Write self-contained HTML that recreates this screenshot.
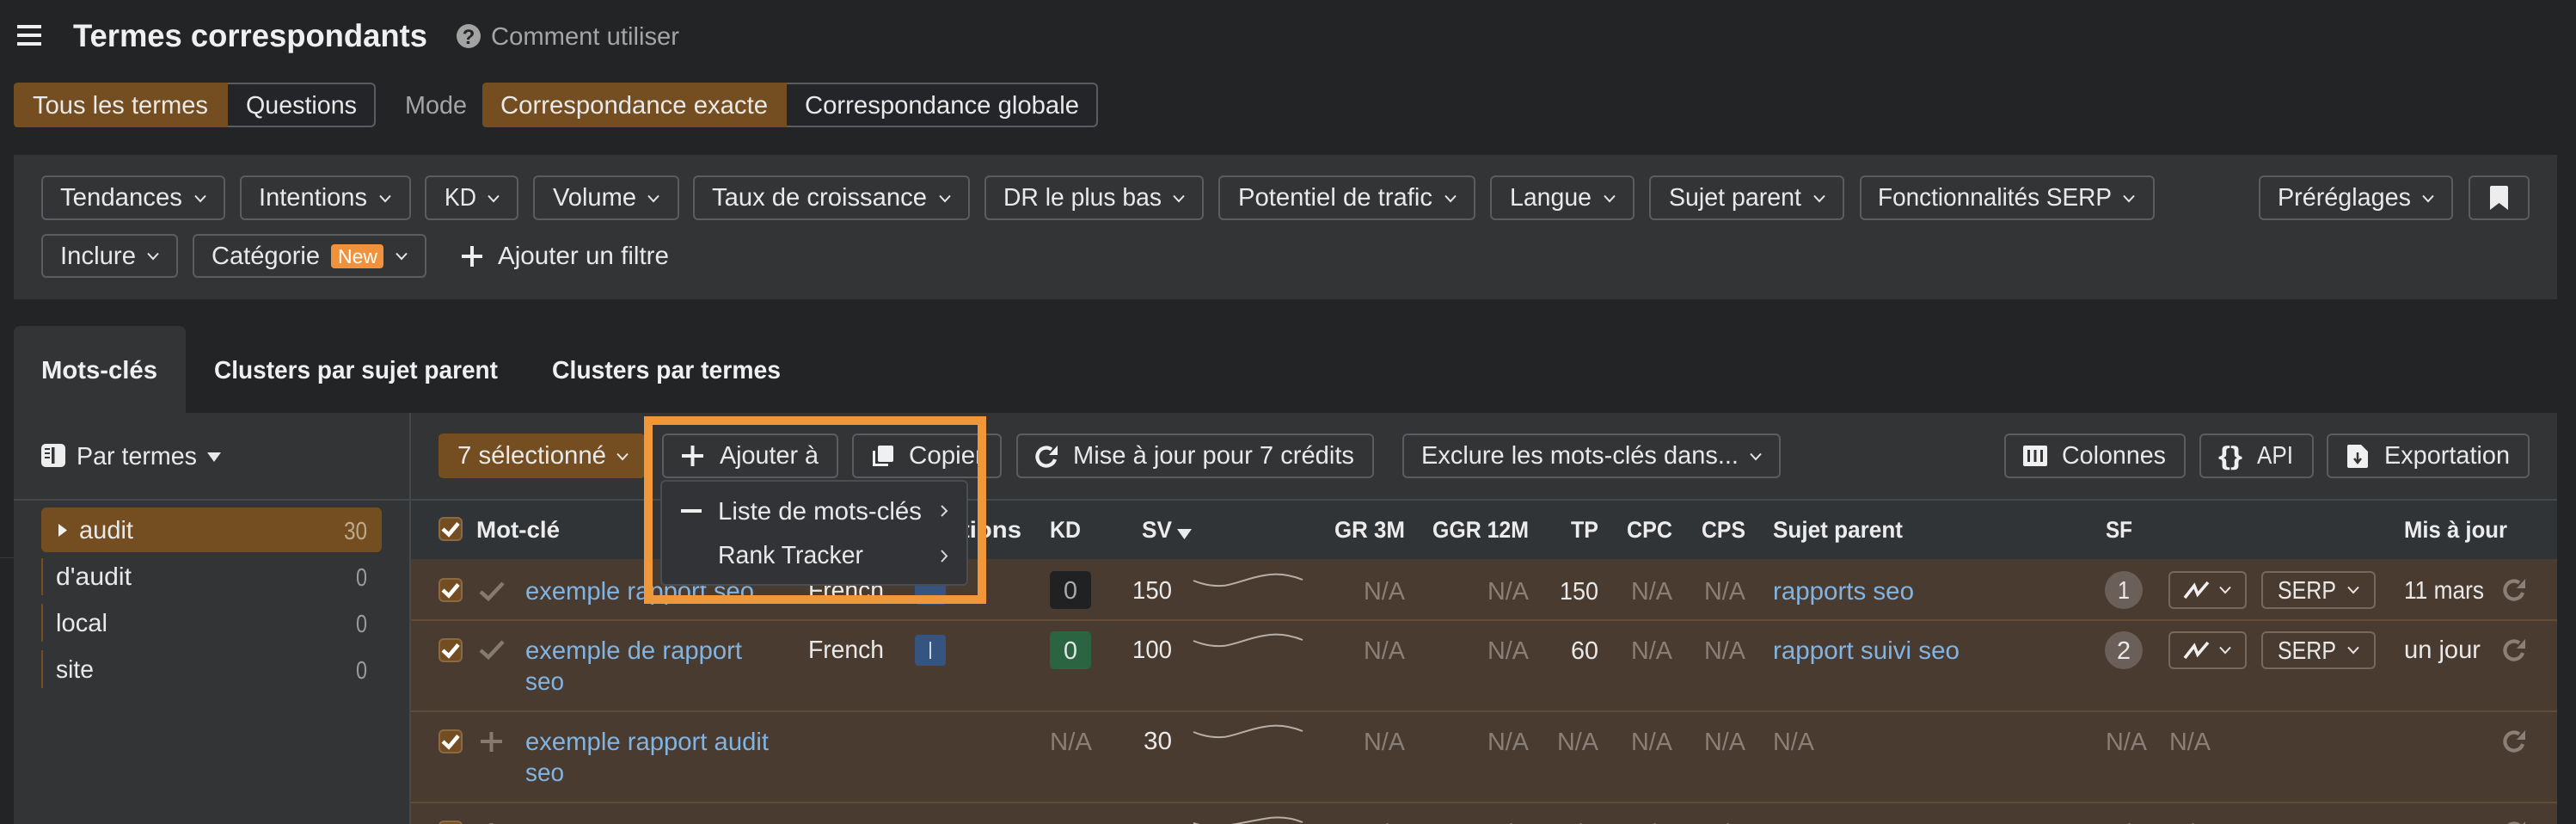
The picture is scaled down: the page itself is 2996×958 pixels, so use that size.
<!DOCTYPE html>
<html lang="fr">
<head>
<meta charset="utf-8">
<title>Termes correspondants</title>
<style>
html,body{margin:0;padding:0;background:#232426;width:2996px;height:958px;overflow:hidden}
svg{display:block;text-rendering:geometricPrecision}
text{font-family:"Liberation Sans",Arial,sans-serif;font-size:29px;fill:#e9e9e9}
.b{fill:none;stroke:#5b5c5f;stroke-width:2}
.rb{fill:none;stroke:#76685d;stroke-width:2}
.h{font-weight:700;font-size:27px;fill:#ececec}
.t{font-weight:700;fill:#f0f0f0}
.l{fill:#82b4e2}
.n{fill:#8a7f76}
.g{fill:#a5a5a5}
.sep{fill:#5f4c33}
.cb{fill:#744e20;stroke:#8a6a44;stroke-width:2}
.ck{fill:none;stroke:#fff;stroke-width:4.5}
.gk{fill:none;stroke:#857a70;stroke-width:4.5}
.sp{fill:none;stroke:#b7aea6;stroke-width:2}
</style>
</head>
<body>
<svg xmlns="http://www.w3.org/2000/svg" width="2996" height="958" viewBox="0 0 2996 958">
<defs>
<path id="c" d="M-6 -3.500L0 3L6 -3.500" fill="none" stroke="#e6e6e6" stroke-width="2"/>
<path id="r" d="M10 3A10.500 10.500 0 1 1 6 -8.500" fill="none" stroke-width="4.200"/>
<path id="ra" d="M13 -13L13 -2L3 -2Z"/>
<path id="sk" d="M1388 675C1400 680 1412 682 1425 680.700C1440 678 1452 672 1470 669C1485 666 1500 668 1515 674" class="sp"/>
<path id="tr" d="M2541 695L2552 681L2556 691L2568 677" fill="none" stroke="#f0f0f0" stroke-width="3.600"/>
<path id="bx" d="M515 686l7 6.500l11 -13" class="ck"/>
<path id="gc" d="M559 688l9 8l17 -18" class="gk"/>
</defs>

<rect width="2996" height="958" fill="#232426"/>

<!-- Header -->
<rect x="20" y="29" width="28" height="4" fill="#f0f0f0"/>
<rect x="20" y="39" width="28" height="4" fill="#f0f0f0"/>
<rect x="20" y="49" width="28" height="4" fill="#f0f0f0"/>
<text class="t" x="85" y="54" style="font-size:37px" textLength="412" lengthAdjust="spacingAndGlyphs">Termes correspondants</text>
<circle cx="545" cy="42" r="14" fill="#a3a3a3"/>
<text x="545" y="51" text-anchor="middle" style="font-size:24px;font-weight:700;fill:#232426">?</text>
<text class="g" x="571" y="52" textLength="219" lengthAdjust="spacingAndGlyphs">Comment utiliser</text>

<!-- Segmented buttons -->
<rect x="17" y="97" width="419" height="50" rx="5" fill="#242528" stroke="#5b5c5f" stroke-width="2"/>
<path d="M21 96H265V148H21Q16 148 16 143V101Q16 96 21 96Z" fill="#744e20"/>
<text x="38" y="132" textLength="204" lengthAdjust="spacingAndGlyphs">Tous les termes</text>
<text x="286" y="132" textLength="129" lengthAdjust="spacingAndGlyphs">Questions</text>
<text class="g" x="471" y="132" textLength="72" lengthAdjust="spacingAndGlyphs">Mode</text>
<rect x="562" y="97" width="714" height="50" rx="5" fill="#242528" stroke="#5b5c5f" stroke-width="2"/>
<path d="M566 96H915V148H566Q561 148 561 143V101Q561 96 566 96Z" fill="#744e20"/>
<text x="582" y="132" textLength="311" lengthAdjust="spacingAndGlyphs">Correspondance exacte</text>
<text x="936" y="132" textLength="319" lengthAdjust="spacingAndGlyphs">Correspondance globale</text>

<!-- Filters panel -->
<rect x="16" y="180" width="2958" height="168" fill="#333436"/>
<rect class="b" x="49" y="205" width="212" height="50" rx="5"/>
<text x="70" y="239" textLength="142" lengthAdjust="spacingAndGlyphs">Tendances</text><use href="#c" x="233" y="231"/>
<rect class="b" x="280" y="205" width="197" height="50" rx="5"/>
<text x="301" y="239" textLength="126" lengthAdjust="spacingAndGlyphs">Intentions</text><use href="#c" x="448" y="231"/>
<rect class="b" x="495" y="205" width="107" height="50" rx="5"/>
<text x="517" y="239" textLength="37" lengthAdjust="spacingAndGlyphs">KD</text><use href="#c" x="574" y="231"/>
<rect class="b" x="621" y="205" width="168" height="50" rx="5"/>
<text x="643" y="239" textLength="97" lengthAdjust="spacingAndGlyphs">Volume</text><use href="#c" x="760" y="231"/>
<rect class="b" x="807" y="205" width="320" height="50" rx="5"/>
<text x="828" y="239" textLength="250" lengthAdjust="spacingAndGlyphs">Taux de croissance</text><use href="#c" x="1099" y="231"/>
<rect class="b" x="1146" y="205" width="253" height="50" rx="5"/>
<text x="1167" y="239" textLength="184" lengthAdjust="spacingAndGlyphs">DR le plus bas</text><use href="#c" x="1371" y="231"/>
<rect class="b" x="1418" y="205" width="297" height="50" rx="5"/>
<text x="1440" y="239" textLength="226" lengthAdjust="spacingAndGlyphs">Potentiel de trafic</text><use href="#c" x="1687" y="231"/>
<rect class="b" x="1734" y="205" width="166" height="50" rx="5"/>
<text x="1756" y="239" textLength="95" lengthAdjust="spacingAndGlyphs">Langue</text><use href="#c" x="1872" y="231"/>
<rect class="b" x="1919" y="205" width="225" height="50" rx="5"/>
<text x="1941" y="239" textLength="154" lengthAdjust="spacingAndGlyphs">Sujet parent</text><use href="#c" x="2116" y="231"/>
<rect class="b" x="2164" y="205" width="341" height="50" rx="5"/>
<text x="2184" y="239" textLength="272" lengthAdjust="spacingAndGlyphs">Fonctionnalités SERP</text><use href="#c" x="2476" y="231"/>
<rect class="b" x="2628" y="205" width="224" height="50" rx="5"/>
<text x="2649" y="239" textLength="155" lengthAdjust="spacingAndGlyphs">Préréglages</text><use href="#c" x="2824" y="231"/>
<rect class="b" x="2872" y="205" width="69" height="50" rx="5"/>
<path d="M2896 218Q2896 216 2898 216H2915Q2917 216 2917 218V244L2906.500 236L2896 244Z" fill="#ededed"/>

<rect class="b" x="49" y="273" width="157" height="49" rx="5"/>
<text x="70" y="307" textLength="88" lengthAdjust="spacingAndGlyphs">Inclure</text><use href="#c" x="178" y="298"/>
<rect class="b" x="225" y="273" width="270" height="49" rx="5"/>
<text x="246" y="307" textLength="126" lengthAdjust="spacingAndGlyphs">Catégorie</text>
<rect x="385" y="284" width="61" height="28" rx="4" fill="#f0923b"/>
<text x="393" y="306" style="font-size:23px;fill:#fff" textLength="46" lengthAdjust="spacingAndGlyphs">New</text>
<use href="#c" x="467" y="298"/>
<rect x="537" y="296" width="24" height="4" fill="#efefef"/><rect x="547" y="286" width="4" height="24" fill="#efefef"/>
<text x="579" y="307" textLength="199" lengthAdjust="spacingAndGlyphs">Ajouter un filtre</text>

<!-- Tabs -->
<path d="M16 480V387Q16 379 24 379H208Q216 379 216 387V480Z" fill="#333436"/>
<text class="t" x="48" y="440" textLength="135" lengthAdjust="spacingAndGlyphs">Mots-clés</text>
<text class="t" x="249" y="440" textLength="330" lengthAdjust="spacingAndGlyphs">Clusters par sujet parent</text>
<text class="t" x="642" y="440" textLength="266" lengthAdjust="spacingAndGlyphs">Clusters par termes</text>

<!-- Main panel -->
<rect x="16" y="480" width="2958" height="478" fill="#333436"/>
<rect x="0" y="648" width="16" height="1" fill="#3a3b3d"/>
<rect x="476" y="480" width="2" height="478" fill="#46494c"/>
<rect x="16" y="580" width="2958" height="2" fill="#46494c"/>

<!-- Sidebar -->
<rect x="48" y="516" width="28" height="27" rx="5" fill="#eeeeee"/>
<rect x="60" y="520" width="3.500" height="19" fill="#333436"/>
<rect x="52" y="521" width="6" height="2" fill="#333436"/><rect x="52" y="526" width="6" height="2" fill="#333436"/><rect x="52" y="531" width="6" height="2" fill="#333436"/>
<text x="89" y="540" textLength="140" lengthAdjust="spacingAndGlyphs">Par termes</text>
<path d="M241 526H257L249 537Z" fill="#e9e9e9"/>
<rect x="48" y="590" width="396" height="52" rx="6" fill="#744e20"/>
<path d="M68 609L78 616.500L68 624Z" fill="#f0f0f0"/>
<text x="92" y="626" textLength="63" lengthAdjust="spacingAndGlyphs">audit</text>
<text x="400" y="627" style="fill:#bda98e" textLength="27" lengthAdjust="spacingAndGlyphs">30</text>
<rect x="48" y="649" width="2" height="43" fill="#744e20"/>
<text x="65" y="680" textLength="88" lengthAdjust="spacingAndGlyphs">d'audit</text>
<text x="414" y="681" textLength="13" lengthAdjust="spacingAndGlyphs" style="fill:#9a9a9a">0</text>
<rect x="48" y="702" width="2" height="44" fill="#744e20"/>
<text x="65" y="734" textLength="60" lengthAdjust="spacingAndGlyphs">local</text>
<text x="414" y="735" textLength="13" lengthAdjust="spacingAndGlyphs" style="fill:#9a9a9a">0</text>
<rect x="48" y="756" width="2" height="44" fill="#744e20"/>
<text x="65" y="788" textLength="44" lengthAdjust="spacingAndGlyphs">site</text>
<text x="414" y="789" textLength="13" lengthAdjust="spacingAndGlyphs" style="fill:#9a9a9a">0</text>

<!-- Table header -->
<rect x="478" y="582" width="2496" height="68" fill="#313437"/>
<rect class="cb" x="511" y="602" width="26" height="26" rx="5"/>
<path d="M515 615l7 6.500l11 -13" class="ck"/>
<text class="h" x="554" y="625" textLength="97" lengthAdjust="spacingAndGlyphs">Mot-clé</text>
<text class="h" x="1048" y="625" textLength="140" lengthAdjust="spacingAndGlyphs">Intentions</text>
<text class="h" x="1221" y="625" textLength="36" lengthAdjust="spacingAndGlyphs">KD</text>
<text class="h" x="1328" y="625" textLength="35" lengthAdjust="spacingAndGlyphs">SV</text>
<path d="M1369 615H1386L1377.500 627Z" fill="#ececec"/>
<text class="h" x="1552" y="625" textLength="82" lengthAdjust="spacingAndGlyphs">GR 3M</text>
<text class="h" x="1666" y="625" textLength="112" lengthAdjust="spacingAndGlyphs">GGR 12M</text>
<text class="h" x="1827" y="625" textLength="32" lengthAdjust="spacingAndGlyphs">TP</text>
<text class="h" x="1892" y="625" textLength="53" lengthAdjust="spacingAndGlyphs">CPC</text>
<text class="h" x="1979" y="625" textLength="51" lengthAdjust="spacingAndGlyphs">CPS</text>
<text class="h" x="2062" y="625" textLength="151" lengthAdjust="spacingAndGlyphs">Sujet parent</text>
<text class="h" x="2449" y="625" textLength="31" lengthAdjust="spacingAndGlyphs">SF</text>
<text class="h" x="2796" y="625" textLength="120" lengthAdjust="spacingAndGlyphs">Mis à jour</text>

<!-- Rows -->
<rect x="478" y="650" width="2496" height="308" fill="#4a3b31"/>
<rect class="sep" x="478" y="720" width="2496" height="2"/>
<rect class="sep" x="478" y="826" width="2496" height="2"/>
<rect class="sep" x="478" y="932" width="2496" height="2"/>

<!-- Row 1 -->
<rect class="cb" x="511" y="673" width="26" height="26" rx="5"/><use href="#bx"/>
<use href="#gc"/>
<text class="l" x="611" y="697" textLength="266" lengthAdjust="spacingAndGlyphs">exemple rapport seo</text>
<text x="940" y="696" textLength="88" lengthAdjust="spacingAndGlyphs">French</text>
<rect x="1064" y="667" width="36" height="36" rx="4" fill="#35547f"/>
<rect x="1221" y="664" width="48" height="44" rx="5" fill="#202122"/>
<text x="1237" y="696" style="fill:#a9a9a9" textLength="16" lengthAdjust="spacingAndGlyphs">0</text>
<text x="1317" y="696" textLength="46" lengthAdjust="spacingAndGlyphs">150</text>
<use href="#sk"/>
<text class="n" x="1586" y="697" textLength="48" lengthAdjust="spacingAndGlyphs">N/A</text>
<text class="n" x="1730" y="697" textLength="48" lengthAdjust="spacingAndGlyphs">N/A</text>
<text x="1814" y="697" textLength="45" lengthAdjust="spacingAndGlyphs">150</text>
<text class="n" x="1897" y="697" textLength="48" lengthAdjust="spacingAndGlyphs">N/A</text>
<text class="n" x="1982" y="697" textLength="48" lengthAdjust="spacingAndGlyphs">N/A</text>
<text class="l" x="2062" y="697" textLength="164" lengthAdjust="spacingAndGlyphs">rapports seo</text>
<circle cx="2470" cy="686" r="22" fill="#6a5f59"/>
<text x="2463" y="696" textLength="14" lengthAdjust="spacingAndGlyphs">1</text>
<rect class="rb" x="2523" y="665" width="89" height="42" rx="5"/>
<use href="#tr"/>
<use href="#c" x="2588" y="686"/>
<rect class="rb" x="2631" y="665" width="131" height="42" rx="5"/>
<text x="2649" y="696" textLength="68" lengthAdjust="spacingAndGlyphs">SERP</text>
<use href="#c" x="2737" y="686"/>
<text x="2796" y="696" textLength="93" lengthAdjust="spacingAndGlyphs">11 mars</text>
<g transform="translate(2924 686)" stroke="#8a8078" fill="#8a8078"><use href="#r"/><use href="#ra" stroke="none"/></g>

<!-- Row 2 -->
<rect class="cb" x="511" y="743" width="26" height="26" rx="5"/><use href="#bx" y="70"/>
<use href="#gc" y="68"/>
<text class="l" x="611" y="766" textLength="252" lengthAdjust="spacingAndGlyphs">exemple de rapport</text>
<text class="l" x="611" y="802" textLength="45" lengthAdjust="spacingAndGlyphs">seo</text>
<text x="940" y="765" textLength="88" lengthAdjust="spacingAndGlyphs">French</text>
<rect x="1064" y="738" width="36" height="36" rx="4" fill="#35547f"/>
<text x="1079" y="766" style="fill:#c8d5e8" textLength="6" lengthAdjust="spacingAndGlyphs">I</text>
<rect x="1221" y="734" width="48" height="44" rx="5" fill="#2b6440"/>
<text x="1237" y="766" style="fill:#e4e4e4" textLength="16" lengthAdjust="spacingAndGlyphs">0</text>
<text x="1317" y="765" textLength="46" lengthAdjust="spacingAndGlyphs">100</text>
<use href="#sk" y="70"/>
<text class="n" x="1586" y="766" textLength="48" lengthAdjust="spacingAndGlyphs">N/A</text>
<text class="n" x="1730" y="766" textLength="48" lengthAdjust="spacingAndGlyphs">N/A</text>
<text x="1827" y="766" textLength="32" lengthAdjust="spacingAndGlyphs">60</text>
<text class="n" x="1897" y="766" textLength="48" lengthAdjust="spacingAndGlyphs">N/A</text>
<text class="n" x="1982" y="766" textLength="48" lengthAdjust="spacingAndGlyphs">N/A</text>
<text class="l" x="2062" y="766" textLength="217" lengthAdjust="spacingAndGlyphs">rapport suivi seo</text>
<circle cx="2470" cy="756" r="22" fill="#6a5f59"/>
<text x="2462" y="766" textLength="16" lengthAdjust="spacingAndGlyphs">2</text>
<rect class="rb" x="2523" y="735" width="89" height="42" rx="5"/>
<use href="#tr" y="70"/>
<use href="#c" x="2588" y="756"/>
<rect class="rb" x="2631" y="735" width="131" height="42" rx="5"/>
<text x="2649" y="766" textLength="68" lengthAdjust="spacingAndGlyphs">SERP</text>
<use href="#c" x="2737" y="756"/>
<text x="2796" y="765" textLength="89" lengthAdjust="spacingAndGlyphs">un jour</text>
<g transform="translate(2924 756)" stroke="#8a8078" fill="#8a8078"><use href="#r"/><use href="#ra" stroke="none"/></g>

<!-- Row 3 -->
<rect class="cb" x="511" y="849" width="26" height="26" rx="5"/><use href="#bx" y="176"/>
<rect x="559" y="860" width="25" height="4" fill="#857a70"/><rect x="569.500" y="851" width="4" height="23" fill="#857a70"/>
<text class="l" x="611" y="872" textLength="283" lengthAdjust="spacingAndGlyphs">exemple rapport audit</text>
<text class="l" x="611" y="908" textLength="45" lengthAdjust="spacingAndGlyphs">seo</text>
<text class="n" x="1221" y="872" textLength="49" lengthAdjust="spacingAndGlyphs">N/A</text>
<text x="1330" y="871" textLength="33" lengthAdjust="spacingAndGlyphs">30</text>
<use href="#sk" y="176"/>
<text class="n" x="1586" y="872" textLength="48" lengthAdjust="spacingAndGlyphs">N/A</text>
<text class="n" x="1730" y="872" textLength="48" lengthAdjust="spacingAndGlyphs">N/A</text>
<text class="n" x="1811" y="872" textLength="48" lengthAdjust="spacingAndGlyphs">N/A</text>
<text class="n" x="1897" y="872" textLength="48" lengthAdjust="spacingAndGlyphs">N/A</text>
<text class="n" x="1982" y="872" textLength="48" lengthAdjust="spacingAndGlyphs">N/A</text>
<text class="n" x="2062" y="872" textLength="48" lengthAdjust="spacingAndGlyphs">N/A</text>
<text class="n" x="2449" y="872" textLength="48" lengthAdjust="spacingAndGlyphs">N/A</text>
<text class="n" x="2523" y="872" textLength="48" lengthAdjust="spacingAndGlyphs">N/A</text>
<g transform="translate(2924 862)" stroke="#8a8078" fill="#8a8078"><use href="#r"/><use href="#ra" stroke="none"/></g>

<!-- Row 4 (cut off) -->
<rect class="cb" x="511" y="955" width="26" height="26" rx="5"/>
<rect x="569.500" y="957" width="4" height="23" fill="#857a70"/>
<path d="M1388 957C1400 961 1412 962 1425 960C1440 958 1452 955 1470 952C1485 949 1500 950 1515 956" class="sp"/>
<text class="n" x="1586" y="978" textLength="48" lengthAdjust="spacingAndGlyphs">N/A</text>
<text class="n" x="1730" y="978" textLength="48" lengthAdjust="spacingAndGlyphs">N/A</text>
<text class="n" x="1811" y="978" textLength="48" lengthAdjust="spacingAndGlyphs">N/A</text>
<text class="n" x="1897" y="978" textLength="48" lengthAdjust="spacingAndGlyphs">N/A</text>
<text class="n" x="1982" y="978" textLength="48" lengthAdjust="spacingAndGlyphs">N/A</text>
<text class="n" x="2449" y="978" textLength="48" lengthAdjust="spacingAndGlyphs">N/A</text>
<text class="n" x="2523" y="978" textLength="48" lengthAdjust="spacingAndGlyphs">N/A</text>
<g transform="translate(2924 968)" stroke="#8a8078" fill="#8a8078"><use href="#r"/><use href="#ra" stroke="none"/></g>

<!-- Toolbar -->
<rect x="510" y="504" width="240" height="52" rx="5" fill="#744e20"/>
<text x="532" y="539" textLength="173" lengthAdjust="spacingAndGlyphs">7 sélectionné</text>
<use href="#c" x="724" y="531"/>
<rect class="b" x="771" y="505" width="203" height="50" rx="5"/>
<rect x="793" y="528" width="25" height="4" fill="#f0f0f0"/><rect x="803.500" y="518" width="4" height="24" fill="#f0f0f0"/>
<text x="837" y="539" textLength="115" lengthAdjust="spacingAndGlyphs">Ajouter à</text>
<rect class="b" x="992" y="505" width="172" height="50" rx="5"/>
<path d="M1016.500 524V540.500H1033" fill="none" stroke="#f0f0f0" stroke-width="3"/>
<rect x="1021" y="518" width="18" height="19" rx="2" fill="#f0f0f0"/>
<text x="1057" y="539" textLength="87" lengthAdjust="spacingAndGlyphs">Copier</text>
<rect class="b" x="1183" y="505" width="414" height="50" rx="5"/>
<g transform="translate(1217 531)" stroke="#f0f0f0" fill="#f0f0f0"><use href="#r"/><use href="#ra" stroke="none"/></g>
<text x="1248" y="539" textLength="327" lengthAdjust="spacingAndGlyphs">Mise à jour pour 7 crédits</text>
<rect class="b" x="1632" y="505" width="438" height="50" rx="5"/>
<text x="1653" y="539" textLength="369" lengthAdjust="spacingAndGlyphs">Exclure les mots-clés dans...</text>
<use href="#c" x="2042" y="531"/>
<rect class="b" x="2332" y="505" width="209" height="50" rx="5"/>
<rect x="2353" y="518" width="28" height="24" rx="2" fill="#f0f0f0"/>
<rect x="2358" y="523" width="3" height="14" fill="#333436"/><rect x="2365.500" y="523" width="3" height="14" fill="#333436"/><rect x="2373" y="523" width="3" height="14" fill="#333436"/>
<text x="2398" y="539" textLength="121" lengthAdjust="spacingAndGlyphs">Colonnes</text>
<rect class="b" x="2559" y="505" width="131" height="50" rx="5"/>
<text x="2580" y="540" style="font-weight:700;font-size:30px;fill:#f0f0f0" textLength="28" lengthAdjust="spacingAndGlyphs">{}</text>
<text x="2625" y="539" textLength="42" lengthAdjust="spacingAndGlyphs">API</text>
<rect class="b" x="2707" y="505" width="234" height="50" rx="5"/>
<path d="M2732 517H2746L2754 525V542Q2754 544 2752 544H2732Q2730 544 2730 542V519Q2730 517 2732 517Z" fill="#f0f0f0"/>
<path d="M2742 526V537M2738 533L2742 538L2746 533" fill="none" stroke="#333436" stroke-width="2.500"/>
<text x="2773" y="539" textLength="146" lengthAdjust="spacingAndGlyphs">Exportation</text>

<!-- Dropdown -->
<rect x="769" y="559" width="356" height="121" rx="5" fill="#323336" stroke="#4c4d50" stroke-width="2"/>
<rect x="792" y="592" width="24" height="4" fill="#f0f0f0"/>
<text x="835" y="604" textLength="237" lengthAdjust="spacingAndGlyphs">Liste de mots-clés</text>
<path d="M1095 588L1101 594L1095 600" fill="none" stroke="#d8d8d8" stroke-width="2"/>
<text x="835" y="655" textLength="169" lengthAdjust="spacingAndGlyphs">Rank Tracker</text>
<path d="M1095 640L1101 646.500L1095 653" fill="none" stroke="#d8d8d8" stroke-width="2"/>

<!-- Orange highlight -->
<rect x="754" y="489" width="388" height="208" fill="none" stroke="#f0973a" stroke-width="10"/>
</svg>
</body>
</html>
